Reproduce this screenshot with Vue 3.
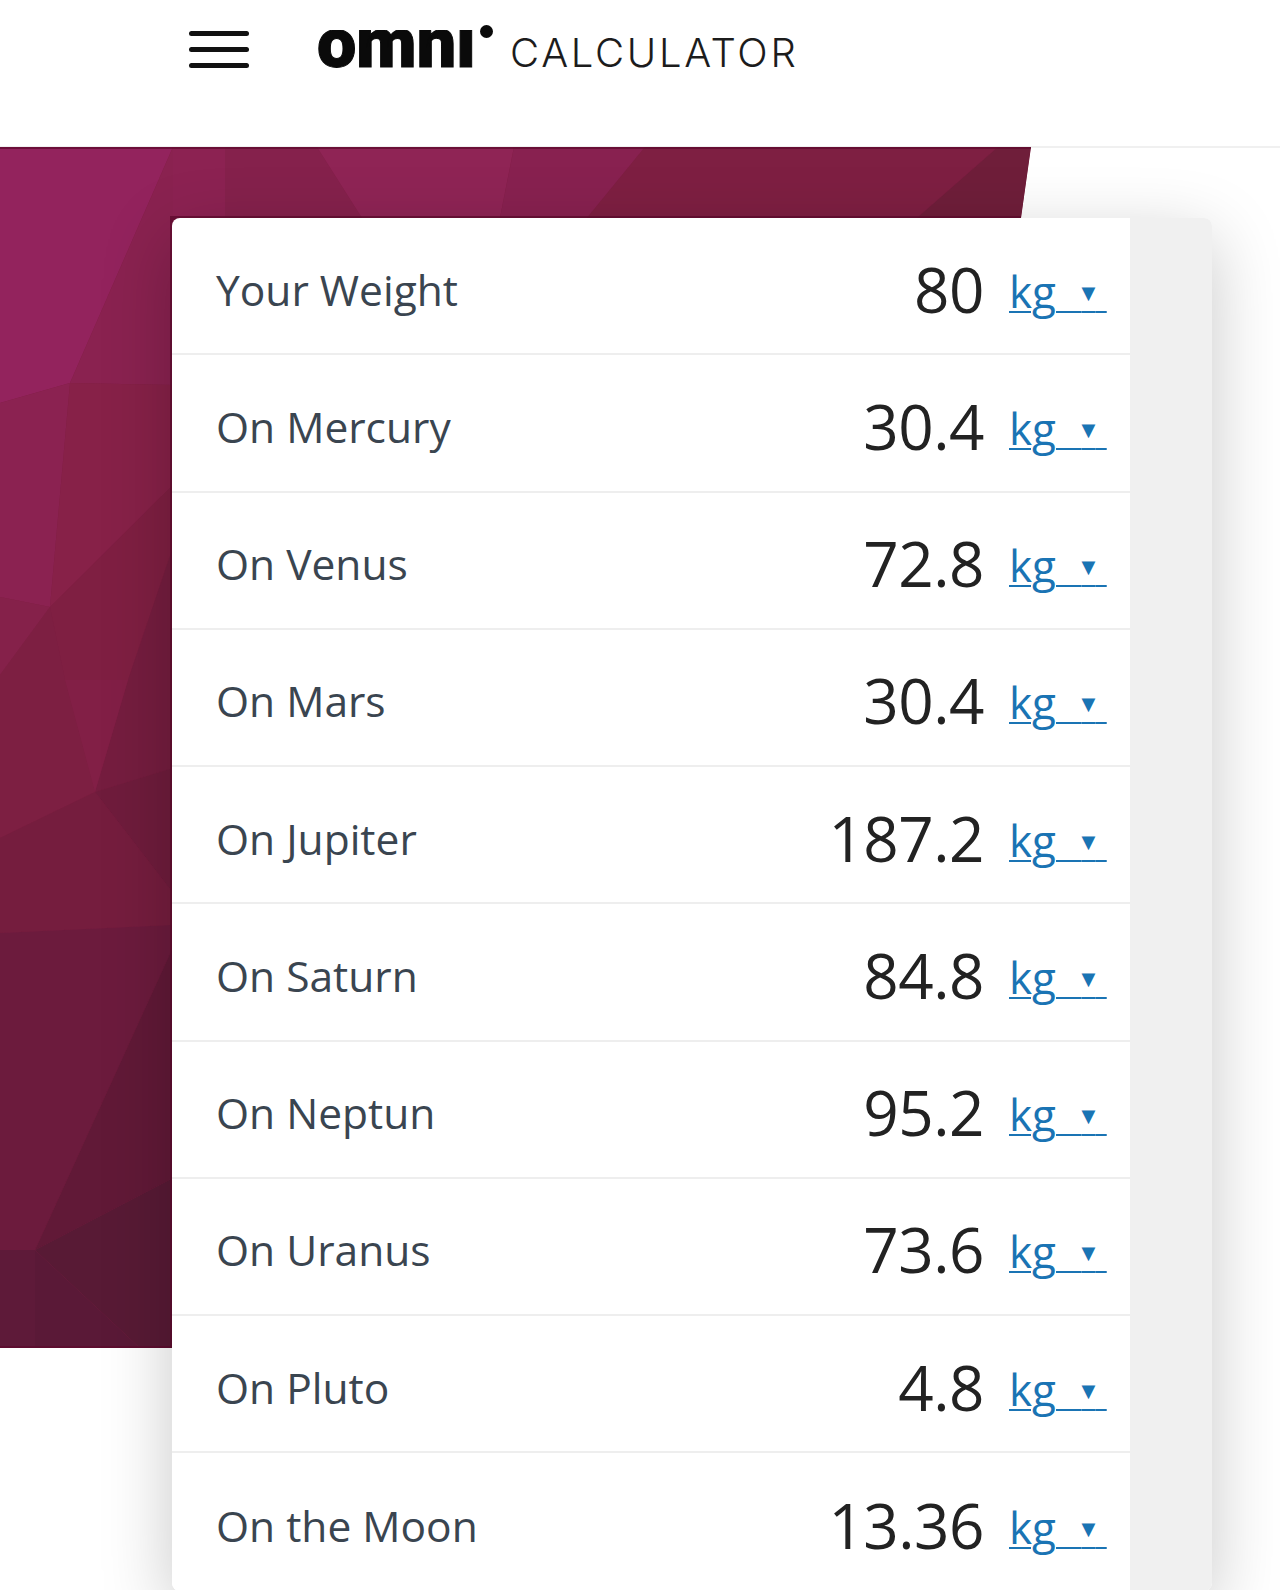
<script setup>
const rows = [
  { label: 'Your Weight', value: '80' },
  { label: 'On Mercury', value: '30.4' },
  { label: 'On Venus', value: '72.8' },
  { label: 'On Mars', value: '30.4' },
  { label: 'On Jupiter', value: '187.2' },
  { label: 'On Saturn', value: '84.8' },
  { label: 'On Neptun', value: '95.2' },
  { label: 'On Uranus', value: '73.6' },
  { label: 'On Pluto', value: '4.8' },
  { label: 'On the Moon', value: '13.36' }
]

const polys = [
  { p: '0,0 1031,0 1031,1201 0,1201', f: '#7d1f42' },
  { p: '0,0 173,0 70,236 0,256', f: '#93235d' },
  { p: '173,0 225,0 225,80 173,80', f: '#8c2252' },
  { p: '225,0 317,0 362,71 225,71', f: '#85214c' },
  { p: '317,0 514,0 500,71 362,71', f: '#8f2455' },
  { p: '514,0 645,0 587,71 500,71', f: '#882150' },
  { p: '645,0 998,0 917,71 587,71', f: '#7e1f42' },
  { p: '998,0 1031,0 1021,71 917,71', f: '#6f1e3a' },
  { p: '173,0 173,238 70,236', f: '#8a2250' },
  { p: '0,256 70,236 50,460 0,450', f: '#8b2251' },
  { p: '70,236 173,238 173,338 50,460', f: '#872148' },
  { p: '173,338 173,400 128,533 65,533 50,460', f: '#7f1f42' },
  { p: '173,400 173,621 95,645 128,533', f: '#751d3f' },
  { p: '0,450 50,460 0,528', f: '#85214a' },
  { p: '0,528 50,460 65,533 95,645 0,691', f: '#7d1f42' },
  { p: '65,533 128,533 95,645', f: '#821f46' },
  { p: '95,645 173,621 173,746', f: '#6f1c3c' },
  { p: '0,691 95,645 173,746 173,778 0,786', f: '#751d3e' },
  { p: '0,786 173,778 173,800 35,1103 0,1103', f: '#6c1b3d' },
  { p: '173,800 173,1031 35,1103', f: '#611937' },
  { p: '35,1103 173,1031 173,1201 140,1201', f: '#581a35' },
  { p: '35,1103 140,1201 35,1201', f: '#5a1937' },
  { p: '0,1103 35,1103 35,1201 0,1201', f: '#5e1a39' }
]
</script>

<template>
  <div class="page">
    <header class="topbar">
      <button class="menu" aria-label="Menu"><i></i><i></i><i></i></button>
      <a class="brand">
        <span class="omni"><span class="omni-clip">omni</span><b class="omni-dot"></b></span>
        <span class="calc">CALCULATOR</span>
      </a>
    </header>

    <main class="main">
      <svg class="hero" viewBox="0 0 1031 1201" width="1031" height="1201" aria-hidden="true">
        <polygon v-for="(s, i) in polys" :key="i" :points="s.p" :fill="s.f" />
        <path d="M0 0H1031M1021 71H172V1201H0" fill="none" stroke="#5f0a2e" stroke-opacity="0.75" stroke-width="4" />
      </svg>

      <section class="card">
        <div class="rows">
          <div v-for="r in rows" :key="r.label" class="row">
            <span class="label">{{ r.label }}</span>
            <span class="value">{{ r.value }}</span>
            <a class="unit">kg<span class="sp">&nbsp;</span><span class="caret">▼</span><span class="sp2">&nbsp;</span></a>
          </div>
        </div>
        <div class="side"></div>
      </section>
    </main>
  </div>
</template>

<style>
html, body { margin: 0; background: #fff; }
</style>

<style scoped>
.page {
  height: 1590px;
  overflow: hidden;
  background: #fff;
  font-family: "Open Sans", "Noto Sans", sans-serif;
}
.topbar {
  height: 146px;
  border-bottom: 2px solid #f0f0f0;
  margin-bottom: -1px;
  display: flex;
  align-items: flex-start;
  padding-left: 189px;
}
.menu {
  width: 60px;
  margin-top: 31px;
  padding: 0;
  border: 0;
  background: none;
  display: flex;
  flex-direction: column;
  gap: 11px;
}
.menu i {
  display: block;
  height: 5px;
  border-radius: 2.5px;
  background: #111;
}
.brand {
  display: flex;
  align-items: flex-start;
  margin-left: 68px;
  color: #111;
}
.omni {
  position: relative;
  display: block;
  width: 193px;
  height: 68px;
}
.omni-clip {
  display: block;
  margin-top: 30px;
  height: 38px;
  overflow: hidden;
  font-family: Roboto, sans-serif;
  font-weight: 900;
  font-size: 70px;
  line-height: 26px;
  color: #0a0a0a;
  -webkit-text-stroke: 1px #0a0a0a;
}
.omni-dot {
  position: absolute;
  left: 163px;
  top: 25px;
  width: 13px;
  height: 13px;
  border-radius: 50%;
  background: #0a0a0a;
}
.calc {
  font-family: Inter, sans-serif;
  font-weight: 300;
  font-size: 40px;
  line-height: 48px;
  margin-top: 29px;
  color: #1c1c1c;
  letter-spacing: 2.7px;
}
.main {
  position: relative;
  padding: 71px 68px 0 172px;
}
.hero {
  position: absolute;
  left: 0;
  top: 0;
  display: block;
  clip-path: polygon(0 0, 100% 0, 1021px 71px, 180px 71px, 180px 80px, 172px 80px, 172px 100%, 0 100%);
}
.card {
  position: relative;
  display: flex;
  width: 1040px;
  border-radius: 8px;
  box-shadow: 0 20px 70px rgba(0, 0, 0, 0.22);
}
.rows {
  width: 958px;
  background: #fff;
  border-radius: 8px 0 0 8px;
}
.side {
  flex: 1;
  background: #f0f0f0;
  border-radius: 0 8px 8px 0;
}
.row {
  height: 137.25px;
  box-sizing: border-box;
  border-bottom: 2px solid #eeeeee;
  display: flex;
  align-items: center;
  padding: 0 23px 0 44px;
}
.row:last-child {
  border-bottom: 0;
}
.label {
  flex: 1;
  font-size: 42.5px;
  line-height: 58px;
  color: #3a4550;
  margin-top: 8px;
}
.value {
  font-size: 62px;
  line-height: 80px;
  color: #222;
  margin-right: 25px;
  letter-spacing: -0.5px;
  margin-top: 6px;
}
.unit {
  width: 98px;
  margin-top: 12px;
  white-space: nowrap;
  font-size: 44px;
  line-height: 56px;
  color: #1a74b4;
  text-decoration: underline;
  text-decoration-thickness: 2px;
  text-underline-offset: 3px;
}
.sp {
  font-size: 44px;
  letter-spacing: 14px;
}
.caret {
  font-family: "DejaVu Sans", sans-serif;
  font-size: 18px;
  vertical-align: 9px;
}
.sp2 {
  font-size: 44px;
}
</style>
